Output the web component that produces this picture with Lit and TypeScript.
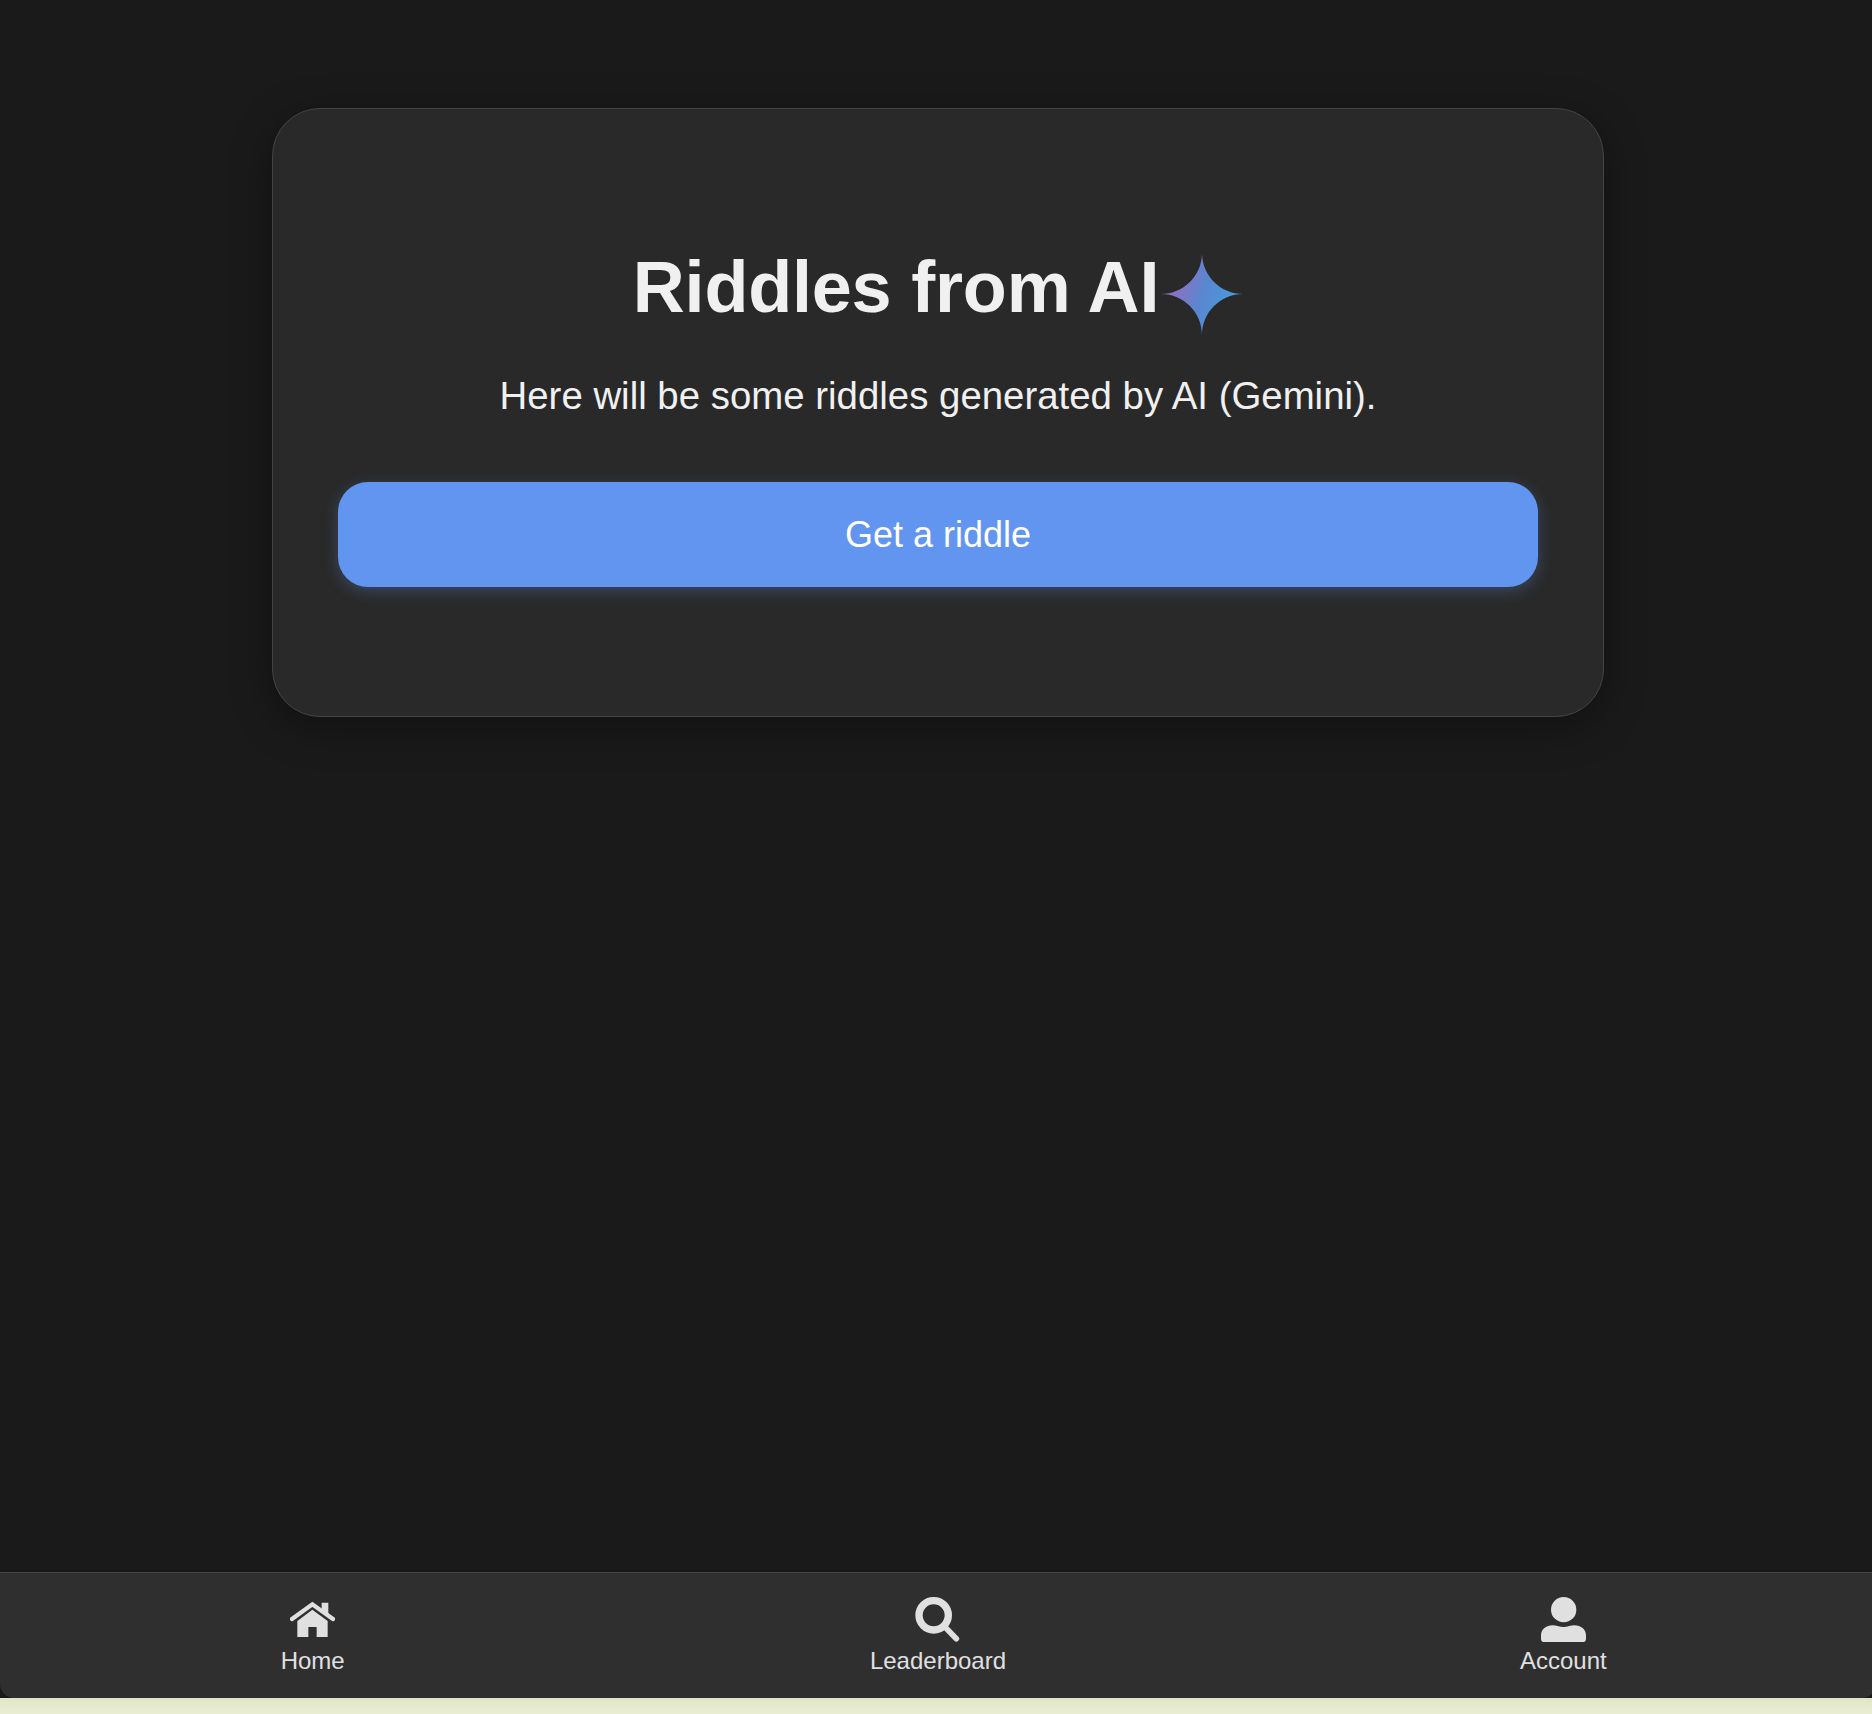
import { LitElement, html, css, svg } from "lit";
import { customElement } from "lit/decorators.js";

const homeIcon = svg`
    <polyline points="6,66 67,22 129,66" fill="none" stroke="currentColor" stroke-width="13" stroke-linecap="round"/>
    <path d="M95 17 H115 V52 L95 38 Z" fill="currentColor"/>
    <path d="M22 72 L67 38 L113 72 V120 H80 V90 H55 V120 H22 Z" fill="currentColor"/>
`;

const searchIcon = svg`
    <circle cx="56" cy="55" r="44" fill="none" stroke="currentColor" stroke-width="22"/>
    <line x1="95" y1="95" x2="124" y2="125" stroke="currentColor" stroke-width="17" stroke-linecap="round"/>
`;

const accountIcon = svg`
    <circle cx="68" cy="38" r="38" fill="currentColor"/>
    <path d="M10 135 A10 10 0 0 1 0 125 V115 C0 98 15 85 35 85 C45 85 55 90 68 90 C80 90 90 85 100 85 C120 85 135 98 135 115 V125 A10 10 0 0 1 125 135 Z" fill="currentColor"/>
`;

@customElement("app-root")
export class AppRoot extends LitElement
{
    static styles = css`
        :host
        {
            display        : flex;
            flex-direction : column;
            height         : 100vh;
            overflow       : hidden;
            background     : #1a1a1a;
            font-family    : "Liberation Sans", Arial, sans-serif;
        }

        .content
        {
            flex            : 1;
            display         : flex;
            justify-content : center;
            align-items     : flex-start;
            width           : 1876px;
            padding-top     : 108px;
        }

        .card
        {
            box-sizing    : border-box;
            width         : 1332px;
            height        : 609px;
            padding       : 139px 65px 0;
            background    : #292929;
            border        : 1px solid #444444;
            border-radius : 48px;
            box-shadow    : 0 10px 40px rgba(0, 0, 0, 0.35);
            text-align    : center;
        }

        .title
        {
            display         : flex;
            justify-content : center;
            align-items     : center;
            gap             : 2px;
            height          : 78px;
            margin          : 0 0 47px;
            font-size       : 72px;
            font-weight     : 700;
            letter-spacing  : -0.2px;
            line-height     : 78px;
            color           : #f0f0f0;
        }

        .star
        {
            width      : 82px;
            height     : 82px;
            flex       : none;
            margin-top : 14px;
        }

        .intro
        {
            margin      : 0 0 63px;
            font-size   : 38.4px;
            line-height : 46px;
            color       : #f0f0f0;
        }

        .action
        {
            display       : block;
            width         : 100%;
            height        : 105px;
            padding       : 0;
            border        : none;
            border-radius : 30px;
            background    : #6195ef;
            box-shadow    : 0 4px 15px rgba(97, 149, 239, 0.3);
            font-family   : inherit;
            font-size     : 36px;
            color         : #ffffff;
        }

        .nav
        {
            display       : flex;
            flex          : none;
            width         : 1876px;
            height        : 125px;
            border-top    : 1px solid #444444;
            border-radius : 0 0 14px 14px;
            background    : #2f2f2f;
            box-shadow    : 0 2px 6px rgba(0, 0, 0, 0.08);
        }

        .nav a
        {
            flex            : 1;
            display         : flex;
            flex-direction  : column;
            align-items     : center;
            padding-top     : 24px;
            color           : #e0e0e0;
            font-size       : 24px;
            line-height     : 28px;
            text-decoration : none;
        }

        .nav svg
        {
            display       : block;
            width         : 45px;
            height        : 45px;
            margin-bottom : 5px;
        }

        .strip
        {
            flex       : none;
            height     : 16px;
            background : linear-gradient(#e0e6c5, #e9eed2);
        }
    `;

    render ()
    {
        return html`
            <main class="content">
                <section class="card">
                    <h1 class="title">
                        <span>Riddles from AI</span>
                        <svg class="star" viewBox="0 0 24 24">
                            <defs>
                                <linearGradient id="gem" x1="0" y1="0.35" x2="1" y2="0.65">
                                    <stop offset="0.1" stop-color="#9a6cc0"/>
                                    <stop offset="0.5" stop-color="#5a86cf"/>
                                    <stop offset="0.95" stop-color="#459fe2"/>
                                </linearGradient>
                            </defs>
                            <path fill="url(#gem)" d="M12 0 C12 6.6 17.4 12 24 12 C17.4 12 12 17.4 12 24 C12 17.4 6.6 12 0 12 C6.6 12 12 6.6 12 0 Z"/>
                        </svg>
                    </h1>
                    <p class="intro">Here will be some riddles generated by AI (Gemini).</p>
                    <button class="action">Get a riddle</button>
                </section>
            </main>
            <nav class="nav">
                <a href="#"><svg viewBox="0 0 135 135">${ homeIcon }</svg>Home</a>
                <a href="#"><svg viewBox="0 0 135 135">${ searchIcon }</svg>Leaderboard</a>
                <a href="#"><svg viewBox="0 0 135 135">${ accountIcon }</svg>Account</a>
            </nav>
            <div class="strip"></div>
        `;
    }
}
